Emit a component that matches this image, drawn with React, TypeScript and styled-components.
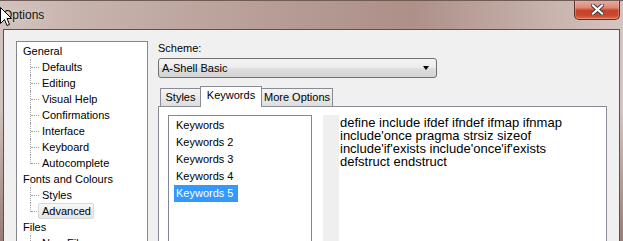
import styled, { createGlobalStyle, css } from "styled-components";

const GlobalStyle = createGlobalStyle`
  html, body {
    margin: 0;
    padding: 0;
  }
  body {
    width: 623px;
    height: 241px;
    overflow: hidden;
    font-family: "Liberation Sans", Arial, sans-serif;
    font-size: 11px;
    color: #000;
  }
`;

const Window = styled.div`
  position: relative;
  width: 623px;
  height: 241px;
  box-sizing: border-box;
  display: flex;
  flex-direction: column;
  padding: 0 3px;
  border-top: 1px solid #6f5c56;
  overflow: hidden;
  background:
    linear-gradient(180deg, rgba(120, 90, 80, 0) 0%, rgba(120, 90, 80, 0) 45%, rgba(110, 78, 68, 0.6) 100%),
    linear-gradient(90deg, #d2c2be 0%, #c6b1ab 15%, #b89e97 42%, #ad9088 66%, #c3aca6 84%, #d5c5c1 100%);
`;

const TitleBar = styled.div`
  height: 28px;
  flex-shrink: 0;
  display: flex;
  align-items: center;
  justify-content: space-between;
`;

const Title = styled.span`
  font-size: 12px;
  color: #111;
  text-shadow: 0 0 6px rgba(255, 255, 255, 0.7);
`;

const CloseButton = styled.div`
  align-self: flex-start;
  margin-top: -1px;
  width: 46px;
  height: 20px;
  box-sizing: border-box;
  display: flex;
  align-items: center;
  justify-content: center;
  border: 1px solid #5e2e24;
  border-top: none;
  border-radius: 0 0 5px 5px;
  background: linear-gradient(180deg, #e8b0a4 0%, #dc8876 40%, #c4432c 55%, #c9472d 80%, #e26c4c 100%);
  box-shadow: inset 0 0 0 1px rgba(255, 210, 200, 0.35);
`;

const Client = styled.div`
  flex: 1;
  min-height: 0;
  display: flex;
  align-items: flex-start;
  gap: 10px;
  padding: 0 12px;
  background: #f0f0f0;
  border: 1px solid #5b5250;
  border-bottom: none;
  overflow: hidden;
`;

const TreeBox = styled.div`
  width: 132px;
  height: 260px;
  flex-shrink: 0;
  box-sizing: border-box;
  margin-top: 11px;
  padding-top: 1px;
  background: #fff;
  border: 1px solid #828790;
`;

const TreeParent = styled.div`
  height: 16px;
  line-height: 16px;
  padding-left: 6px;
  white-space: nowrap;
`;

const TreeChild = styled.div<{ last?: boolean }>`
  position: relative;
  height: 16px;
  padding-left: 21px;
  white-space: nowrap;

  &::before {
    content: "";
    position: absolute;
    left: 14px;
    top: 8px;
    width: 8px;
    border-top: 1px dotted #a0a0a0;
  }

  &::after {
    content: "";
    position: absolute;
    left: 13px;
    top: 0;
    height: ${(p) => (p.last ? "9px" : "16px")};
    border-left: 1px dotted #a0a0a0;
  }
`;

const TreeLabel = styled.span<{ selected?: boolean }>`
  position: relative;
  z-index: 1;
  display: inline-block;
  height: 16px;
  box-sizing: border-box;
  line-height: 14px;
  padding: 0 2px 0 3px;
  border: 1px solid transparent;
  border-radius: 2px;

  ${(p) =>
    p.selected &&
    css`
      border-color: #d9d9d9;
      background: linear-gradient(180deg, #f8f8f8 0%, #e5e5e5 100%);
    `}
`;

const RightColumn = styled.div`
  width: 449px;
  flex-shrink: 0;
  margin-top: 10px;
  display: flex;
  flex-direction: column;
`;

const FieldLabel = styled.div`
  line-height: 16px;
`;

const Select = styled.div`
  width: 279px;
  height: 20px;
  box-sizing: border-box;
  margin-top: 2px;
  display: flex;
  align-items: center;
  justify-content: space-between;
  padding: 0 7px 0 3px;
  border: 1px solid #707070;
  border-radius: 3px;
  line-height: 18px;
  background: linear-gradient(180deg, #f3f3f3 0%, #ececec 48%, #dedede 52%, #d3d3d3 100%);
`;

const Caret = styled.span`
  width: 0;
  height: 0;
  border-left: 3px solid transparent;
  border-right: 3px solid transparent;
  border-top: 4px solid #000;
`;

const TabRow = styled.div`
  position: relative;
  z-index: 1;
  height: 20px;
  margin-top: 8px;
  padding-left: 2px;
  display: flex;
  align-items: flex-end;
`;

const Tab = styled.div<{ active?: boolean; w: number }>`
  position: relative;
  width: ${(p) => p.w}px;
  height: 18px;
  box-sizing: border-box;
  margin-left: -1px;
  border: 1px solid #898c95;
  border-bottom: none;
  text-align: center;
  line-height: 17px;
  background: linear-gradient(180deg, #f4f4f4 0%, #e9e9e9 50%, #dddddd 100%);

  &:first-child {
    margin-left: 0;
  }

  ${(p) =>
    p.active &&
    css`
      z-index: 2;
      height: 21px;
      margin-bottom: -1px;
      padding-bottom: 3px;
      background: #fff;
    `}
`;

const TabPanel = styled.div`
  height: 160px;
  box-sizing: border-box;
  display: flex;
  align-items: flex-start;
  gap: 11px;
  padding: 8px 0 0 9px;
  background: #fff;
  border: 1px solid #898c95;
`;

const ListBox = styled.div`
  width: 144px;
  height: 150px;
  flex-shrink: 0;
  box-sizing: border-box;
  padding-top: 1px;
  border: 1px solid #828790;
  background: #fff;
`;

const ListRow = styled.div`
  height: 17px;
  padding-left: 5px;
  white-space: nowrap;
`;

const ListItem = styled.span<{ selected?: boolean }>`
  display: inline-block;
  height: 17px;
  line-height: 17px;
  padding: 0 5px 0 2px;

  ${(p) =>
    p.selected &&
    css`
      background: #3399ff;
      color: #fff;
    `}
`;

const Editor = styled.div`
  flex: 1;
  height: 150px;
  display: flex;
`;

const Margin = styled.div`
  width: 16px;
  flex-shrink: 0;
  background: #efefef;
`;

const EditorText = styled.div`
  padding: 1px 0 0 1px;
  font-size: 13px;
  line-height: 13px;
`;

const EditorLine = styled.div`
  white-space: pre;
`;

const Cursor = styled.svg`
  position: absolute;
  left: 0;
  top: 6px;
  z-index: 10;
`;

const tree = [
  {
    name: "General",
    children: ["Defaults", "Editing", "Visual Help", "Confirmations", "Interface", "Keyboard", "Autocomplete"],
  },
  { name: "Fonts and Colours", children: ["Styles", "Advanced"] },
  { name: "Files", children: ["New File"] },
];

const keywordSets = ["Keywords", "Keywords 2", "Keywords 3", "Keywords 4", "Keywords 5"];

const keywordLines = [
  "define include ifdef ifndef ifmap ifnmap",
  "include'once pragma strsiz sizeof",
  "include'if'exists include'once'if'exists",
  "defstruct endstruct",
];

function App() {
  return (
    <>
      <GlobalStyle />
      <Window>
        <TitleBar>
          <Title>Options</Title>
          <CloseButton>
            <svg width="13" height="11" viewBox="0 0 13 11">
              <path d="M2 1.5 L11 9.5 M11 1.5 L2 9.5" stroke="#3a3a3a" strokeWidth="4" strokeLinecap="square" />
              <path d="M2 1.5 L11 9.5 M11 1.5 L2 9.5" stroke="#fff" strokeWidth="2.2" strokeLinecap="square" />
            </svg>
          </CloseButton>
        </TitleBar>
        <Client>
          <TreeBox>
            {tree.map((group) => (
              <div key={group.name}>
                <TreeParent>{group.name}</TreeParent>
                {group.children.map((child, i) => (
                  <TreeChild key={child} last={i === group.children.length - 1 && group.name !== "Files"}>
                    <TreeLabel selected={child === "Advanced"}>{child}</TreeLabel>
                  </TreeChild>
                ))}
              </div>
            ))}
          </TreeBox>
          <RightColumn>
            <FieldLabel>Scheme:</FieldLabel>
            <Select>
              <span>A-Shell Basic</span>
              <Caret />
            </Select>
            <TabRow>
              <Tab w={41}>Styles</Tab>
              <Tab w={62} active>
                Keywords
              </Tab>
              <Tab w={72}>More Options</Tab>
            </TabRow>
            <TabPanel>
              <ListBox>
                {keywordSets.map((k) => (
                  <ListRow key={k}>
                    <ListItem selected={k === "Keywords 5"}>{k}</ListItem>
                  </ListRow>
                ))}
              </ListBox>
              <Editor>
                <Margin />
                <EditorText>
                  {keywordLines.map((line) => (
                    <EditorLine key={line}>{line}</EditorLine>
                  ))}
                </EditorText>
              </Editor>
            </TabPanel>
          </RightColumn>
        </Client>
        <Cursor width="12" height="20" viewBox="0 0 12 20">
          <path d="M0.5 0.5 L0.5 16.5 L4.5 12.5 L7 18.5 L9.5 17.5 L7 11.5 L11.5 11.5 Z" fill="#fff" stroke="#000" strokeWidth="1" />
        </Cursor>
      </Window>
    </>
  );
}

export default App;
